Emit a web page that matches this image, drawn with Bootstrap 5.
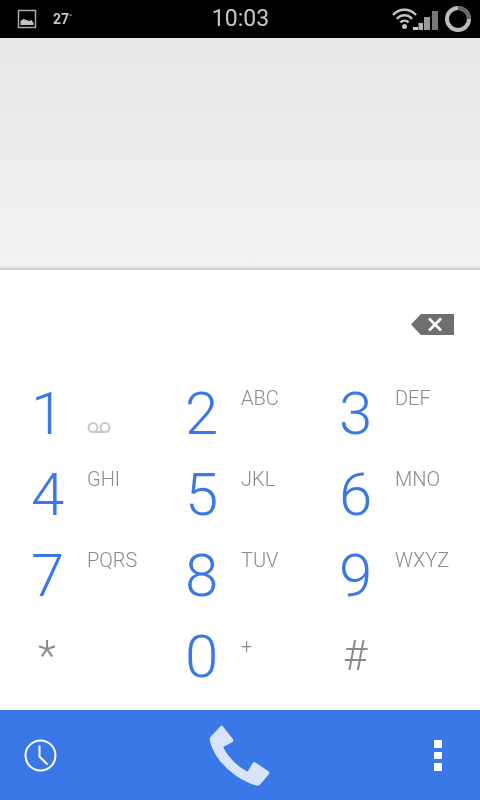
<!DOCTYPE html>
<html lang="en">
<head>
<meta charset="utf-8">
<title>Dialer</title>
<link href="https://cdn.jsdelivr.net/npm/bootstrap@5.3.0/dist/css/bootstrap.min.css" rel="stylesheet">
<style>
html,body{margin:0;height:800px;overflow:hidden;background:#fff;font-family:Roboto,"Liberation Sans",sans-serif}
.phone{width:480px;height:800px}
.statusbar{height:38px;background:#000;flex:none;padding:0 8px 0 17px;will-change:transform}
.st-side{flex:1 1 0}
.st-temp{font-size:14px;font-weight:700;margin-left:16px;color:#c4c4c4}
.st-temp sup{font-size:8px;top:-.6em}
.st-time{font-size:23px;font-weight:400;text-align:center;color:#c8c8c8;position:relative;left:-4px}
.digits-field{height:230px;flex:none;background:linear-gradient(#e8e8e8,#f2f2f2)}
.field-shadow{height:2px;flex:none;background:#d0d0d0;box-shadow:0 -2px 2px #e2e2e2}
.del-row{height:102px;flex:none;padding:44px 26px 0 0}
.pad{display:grid;grid-template-columns:repeat(3,154px);grid-auto-rows:81px;padding-left:31px;height:338px;flex:none;will-change:transform}
.pad-key{display:flex;padding:0}
.pad-num{font-size:60px;font-weight:300;line-height:83px;color:#3b78e7;width:56px}
.pad-sym{font-size:42px;font-weight:300;line-height:81px;color:#8a8a8a;width:56px}
.sym-star{padding-left:7px}
.sym-hash{padding-left:4px}
.pad-let{font-size:20px;font-weight:300;line-height:24px;color:#8a8a8a;margin-top:14px}
.pad-plus{font-size:20px;font-weight:300;line-height:22px;color:#8a8a8a;margin-top:20px}
.vm{margin-top:49px}
.actionbar{height:90px;background:#3b78e7;flex:none}
.act-side{flex:1 1 0}
.act-clock{margin-left:24px}
.act-more{margin-right:38px}
.act-call{margin-top:1px}
</style>
</head>
<body>
<div class="phone d-flex flex-column">
  <div class="statusbar d-flex align-items-center">
    <div class="st-side d-flex align-items-center">
      <svg width="20" height="20" viewBox="0 0 20 20"><rect x="1.500" y="1.500" width="17" height="17" fill="none" stroke="#aaa" stroke-width="1.500"/><path d="M3.500 16v-4l3-2 3 1 3 1 2-1 2 3v2z" fill="#c4c4c4"/></svg>
      <span class="st-temp">27<sup>°</sup></span>
    </div>
    <span class="st-time">10:03</span>
    <div class="st-side d-flex align-items-center justify-content-end gap-1">
      <svg width="48" height="24" viewBox="0 0 48 24"><path d="M1 8C7 1 18 1 24 8M5 12c4-5 11-5 15 0M8.500 15.500c2-2.500 6-2.500 8 0" fill="none" stroke="#c4c4c4" stroke-width="2.400"/><circle cx="12.500" cy="19.500" r="2.500" fill="#c4c4c4"/><path d="M21 20h5v3h-5z" fill="#ccc"/><path d="M26.500 16h4.500v7h-4.500z" fill="#b4b4b4"/><path d="M32 10h6v13h-6z" fill="#999"/><path d="M40 4h6v19h-6z" fill="#777"/></svg>
      <svg width="28" height="28" viewBox="0 0 28 28"><circle cx="14" cy="14" r="11" fill="none" stroke="#bdbdbd" stroke-width="4"/><path d="M14 3a11 11 0 0 1 11 11" fill="none" stroke="#666" stroke-width="4"/></svg>
    </div>
  </div>
  <div class="digits-field"></div>
  <div class="field-shadow"></div>
  <div class="del-row d-flex justify-content-end align-items-start">
    <svg width="43" height="21" viewBox="0 0 43 21"><path d="M0 10.500 10 0h33v21H10z" fill="#6e6e6e"/><path d="M18 4.500 30 16.500M30 4.500 18 16.500" stroke="#fff" stroke-width="2.600"/></svg>
  </div>
  <div class="pad">
    <div class="pad-key"><span class="pad-num">1</span><svg class="vm" width="24" height="13" viewBox="0 0 24 13"><circle cx="6" cy="6.500" r="4.500" fill="none" stroke="#c8c8c8" stroke-width="2"/><circle cx="18" cy="6.500" r="4.500" fill="none" stroke="#c8c8c8" stroke-width="2"/><path d="M6 11h12" stroke="#c8c8c8" stroke-width="2"/></svg></div>
    <div class="pad-key"><span class="pad-num">2</span><span class="pad-let">ABC</span></div>
    <div class="pad-key"><span class="pad-num">3</span><span class="pad-let">DEF</span></div>
    <div class="pad-key"><span class="pad-num">4</span><span class="pad-let">GHI</span></div>
    <div class="pad-key"><span class="pad-num">5</span><span class="pad-let">JKL</span></div>
    <div class="pad-key"><span class="pad-num">6</span><span class="pad-let">MNO</span></div>
    <div class="pad-key"><span class="pad-num">7</span><span class="pad-let">PQRS</span></div>
    <div class="pad-key"><span class="pad-num">8</span><span class="pad-let">TUV</span></div>
    <div class="pad-key"><span class="pad-num">9</span><span class="pad-let">WXYZ</span></div>
    <div class="pad-key"><span class="pad-sym sym-star">*</span></div>
    <div class="pad-key"><span class="pad-num">0</span><span class="pad-plus">+</span></div>
    <div class="pad-key"><span class="pad-sym sym-hash">#</span></div>
  </div>
  <div class="actionbar d-flex align-items-center">
    <div class="act-side d-flex">
      <svg class="act-clock" width="33" height="33" viewBox="0 0 33 33"><circle cx="16.500" cy="16.500" r="15" fill="none" stroke="#fff" stroke-width="2"/><path d="M15.500 6.500v11l8 8" fill="none" stroke="#fff" stroke-width="2"/></svg>
    </div>
    <svg class="act-call" width="62" height="62" viewBox="630 72 185 186"><path d="M664 76c3-2 6-2 8 1l29 37c3 4 2 7-2 10l-27 14c13 28 40 57 73 74l15-25c3-4 6-4 10-2l38 26c3 2 3 5 1 9l-25 29c-4 5-9 6-16 4-64-22-121-74-136-134-1-6 0-10 4-13z" fill="#d7e4fa"/></svg>
    <div class="act-side d-flex justify-content-end">
      <svg class="act-more" width="8" height="31" viewBox="0 0 8 31"><path d="M0 0h8v8H0zM0 12h8v7H0zM0 23h8v8H0z" fill="#fff"/></svg>
    </div>
  </div>
</div>
</body>
</html>
